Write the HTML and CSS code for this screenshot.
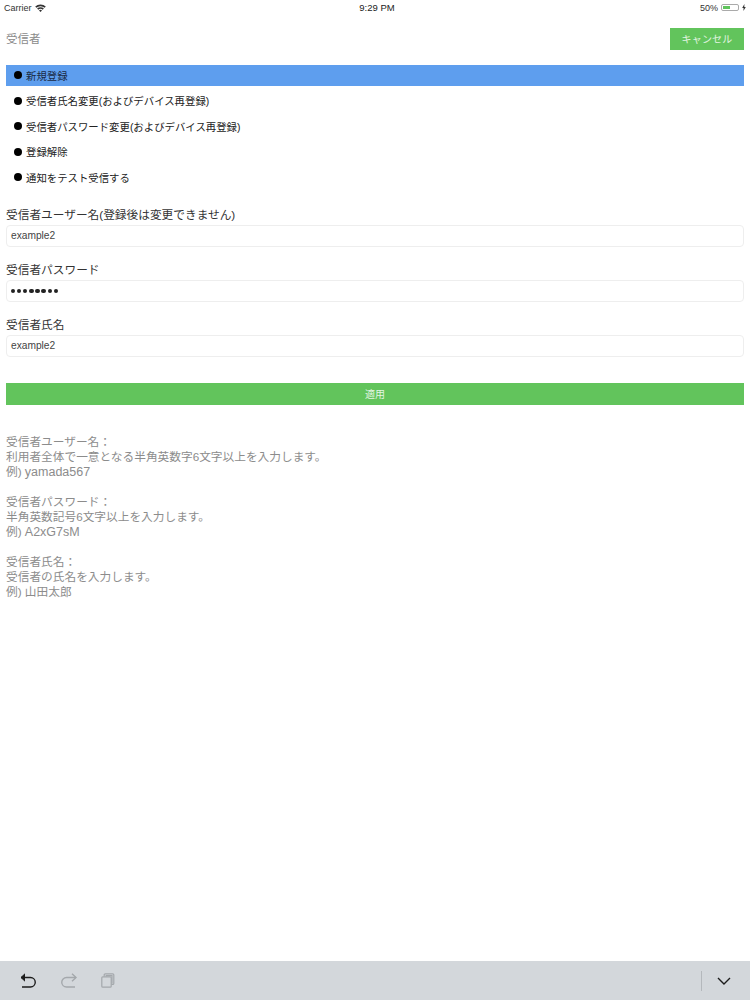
FILE: index.html
```html
<!DOCTYPE html>
<html lang="ja">
<head>
  <meta charset="UTF-8">
  <meta name="viewport" content="width=device-width, initial-scale=1.0">
  <title>受信者</title>
  <link rel="stylesheet" href="styles.css">
</head>
<body>

  <div class="status-bar">
    <div class="status-left">
      <span>Carrier</span>
      <svg class="wifi" width="11" height="8" viewBox="0 0 11 8">
        <path d="M0.2 2.6 A7.6 7.6 0 0 1 10.8 2.6 L9.6 3.8 A5.9 5.9 0 0 0 1.4 3.8 Z" fill="#333"/>
        <path d="M2.1 4.5 A4.9 4.9 0 0 1 8.9 4.5 L7.7 5.7 A3.2 3.2 0 0 0 3.3 5.7 Z" fill="#333"/>
        <path d="M4 6.4 A2.2 2.2 0 0 1 7 6.4 L5.5 8 Z" fill="#333"/>
      </svg>
    </div>
    <div class="status-time">9:29 PM</div>
    <div class="status-right">
      <span>50%</span>
      <div class="battery"><div class="battery-level"></div></div>
      <svg width="4" height="7" viewBox="0 0 4 7"><path d="M2.4 0 L0.2 3.9 H1.6 L1.4 7 L3.8 2.9 H2.3 Z" fill="#333"/></svg>
    </div>
  </div>

  <div class="content">
    <div class="header">
      <div class="title">受信者</div>
      <button class="cancel">キャンセル</button>
    </div>

    <ul class="menu">
      <li class="selected"><span class="dot"></span>新規登録</li>
      <li><span class="dot"></span>受信者氏名変更(およびデバイス再登録)</li>
      <li><span class="dot"></span>受信者パスワード変更(およびデバイス再登録)</li>
      <li><span class="dot"></span>登録解除</li>
      <li><span class="dot"></span>通知をテスト受信する</li>
    </ul>

    <div class="form">
      <div class="field">
        <label>受信者ユーザー名(登録後は変更できません)</label>
        <div class="input">example2</div>
      </div>
      <div class="field">
        <label>受信者パスワード</label>
        <div class="input password">
          <span></span><span></span><span></span><span></span><span></span><span></span><span></span><span></span>
        </div>
      </div>
      <div class="field">
        <label>受信者氏名</label>
        <div class="input">example2</div>
      </div>
    </div>

    <button class="apply">適用</button>

    <div class="help">
      <p>受信者ユーザー名：<br>利用者全体で一意となる半角英数字6文字以上を入力します。<br>例) <span class="sample">yamada567</span></p>
      <p>受信者パスワード：<br>半角英数記号6文字以上を入力します。<br>例) <span class="sample">A2xG7sM</span></p>
      <p>受信者氏名：<br>受信者の氏名を入力します。<br>例) 山田太郎</p>
    </div>
  </div>

  <div class="toolbar">
    <div class="tools">
      <svg width="18" height="16" viewBox="0 0 18 16" fill="none" stroke="#1c1c1c" stroke-width="1.4">
        <path d="M2 4.5 H11.5 A4.6 4.6 0 0 1 11.5 14 H3"/>
        <path d="M6 0.8 L2 4.5 L6 8.2" fill="#1c1c1c" stroke-width="1"/>
      </svg>
      <svg width="18" height="16" viewBox="0 0 18 16" fill="none" stroke="#a4a8ac" stroke-width="1.4">
        <path d="M16 4.5 H6.5 A4.6 4.6 0 0 0 6.5 14 H15"/>
        <path d="M12 0.8 L16 4.5 L12 8.2"/>
      </svg>
      <svg width="15" height="15" viewBox="0 0 15 15" fill="none" stroke="#a4a8ac" stroke-width="1.2">
        <rect x="0.8" y="3.8" width="9.4" height="10.4" rx="1"/>
        <path d="M3.2 3.6 V1.8 Q3.2 0.8 4.2 0.8 H11.8 Q12.8 0.8 12.8 1.8 V10.4 Q12.8 11.4 11.8 11.4 H10.4"/>
        <path d="M5.2 3.6 V2.6 H11 V9.8 H10.4"/>
      </svg>
    </div>
    <div class="tools-right">
      <div class="divider"></div>
      <svg width="14" height="8" viewBox="0 0 14 8" fill="none" stroke="#1c1c1c" stroke-width="1.4">
        <path d="M1 1 L7 7 L13 1"/>
      </svg>
    </div>
  </div>

</body>
</html>
```

FILE: styles.css
```css
body {
  display: flex;
  flex-direction: column;
  height: 1000px;
  margin: 0;
  font-family: "Liberation Sans", "Noto Sans CJK JP", sans-serif;
  background-color: #fff;
  color: #333;
  overflow: hidden;
}

.status-bar {
  display: grid;
  grid-template-columns: 1fr auto 1fr;
  align-items: center;
  height: 15px;
  padding: 0 4px;
  font-size: 9px;
  color: #333;
}

.status-left,
.status-right {
  display: flex;
  align-items: center;
  gap: 3px;
}

.status-right {
  justify-content: flex-end;
}

.status-time {
  margin-left: 4px;
  font-size: 9.5px;
  color: #222;
}

.battery {
  width: 18px;
  height: 7px;
  border: 1px solid #aaa;
  border-radius: 2px;
  padding: 1px;
  box-sizing: border-box;
}

.battery-level {
  width: 50%;
  height: 100%;
  background-color: #5fc45c;
}

.content {
  flex: 1;
  padding: 13px 6px 0;
}

.header {
  display: flex;
  justify-content: space-between;
  align-items: center;
  height: 22px;
}

.title {
  margin-bottom: 2px;
  font-size: 11.5px;
  color: #8a8a8a;
}

.cancel {
  width: 74px;
  height: 22px;
  padding: 0 0 2px;
  border: none;
  background-color: #62c45c;
  color: #e4f5e2;
  font-family: inherit;
  font-size: 10px;
  letter-spacing: 0.2px;
}

.menu {
  list-style: none;
  margin: 15px 0 0;
  padding: 0;
}

.menu li {
  display: flex;
  align-items: center;
  height: 21px;
  margin-bottom: 4.6px;
  padding: 0 0 1px 8px;
  box-sizing: border-box;
  font-size: 10.4px;
  color: #222;
}

.menu li.selected {
  background-color: #5e9eee;
  color: #1a2a44;
}

.dot {
  width: 8px;
  height: 8px;
  margin-right: 4px;
  border-radius: 50%;
  background-color: #000;
}

.form {
  margin-top: 18px;
}

.field {
  margin-bottom: 14px;
}

.field label {
  display: block;
  height: 19px;
  line-height: 18px;
  font-size: 11.7px;
  color: #333;
}

.input {
  display: flex;
  align-items: center;
  height: 22px;
  padding: 0 4px 1px;
  border: 1px solid #eee;
  border-radius: 4px;
  box-sizing: border-box;
  font-size: 10.2px;
  color: #444;
  background-color: #fff;
}

.password {
  gap: 1.8px;
}

.password span {
  width: 4.3px;
  height: 4.3px;
  border-radius: 50%;
  background-color: #222;
}

.apply {
  display: block;
  width: 100%;
  height: 22px;
  margin-top: 26px;
  padding: 0 0 2px;
  border: none;
  background-color: #62c45c;
  color: #e4f5e2;
  font-family: inherit;
  font-size: 10px;
}

.help {
  margin-top: 29px;
  font-size: 11.7px;
  line-height: 15px;
  color: #8c8c8c;
}

.help p {
  margin: 0 0 15px;
}

.sample {
  font-size: 12.5px;
  line-height: 1;
}

.toolbar {
  display: flex;
  justify-content: space-between;
  align-items: center;
  height: 39px;
  padding: 0 19px 0 19px;
  background-color: #d3d7db;
}

.tools {
  display: flex;
  align-items: center;
  gap: 23px;
}

.tools-right {
  display: flex;
  align-items: center;
  gap: 15px;
}

.divider {
  width: 1px;
  height: 20px;
  background-color: #b4b8bc;
}
```
